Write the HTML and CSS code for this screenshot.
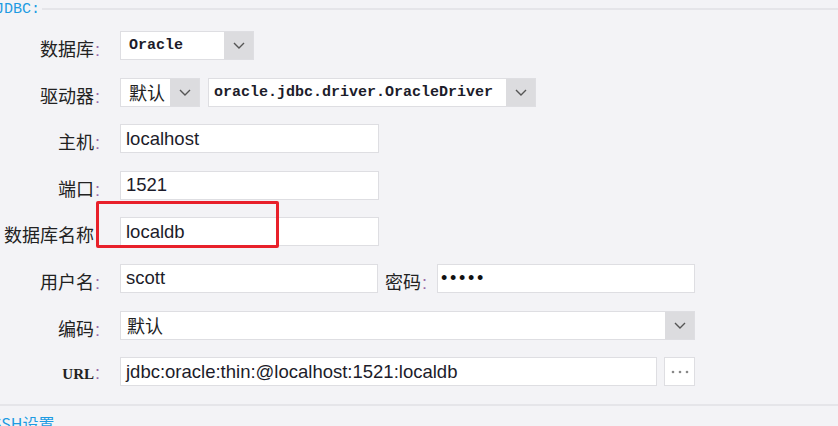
FILE: index.html
```html
<!DOCTYPE html>
<html lang="zh-CN">
<head>
    <meta charset="UTF-8">
    <title>数据连接</title>
    <link rel="stylesheet" href="styles.css">
</head>
<body>
    <div class="panel">
        <div class="group-title">
            <span class="group-name">JDBC:</span>
            <span class="group-line"></span>
        </div>

        <div class="form">
            <div class="row">
                <label class="label">数据库<span class="colon">:</span></label>
                <div class="select w-db">
                    <span class="select-text mono">Oracle</span>
                    <span class="select-btn"><svg width="12" height="7" viewBox="0 0 12 7"><path d="M1 1 L6 6 L11 1" fill="none" stroke="#555" stroke-width="1.4"/></svg></span>
                </div>
            </div>

            <div class="row">
                <label class="label">驱动器<span class="colon">:</span></label>
                <div class="select w-mode">
                    <span class="select-text">默认</span>
                    <span class="select-btn"><svg width="12" height="7" viewBox="0 0 12 7"><path d="M1 1 L6 6 L11 1" fill="none" stroke="#555" stroke-width="1.4"/></svg></span>
                </div>
                <div class="select w-driver">
                    <span class="select-text mono tight">oracle.jdbc.driver.OracleDriver</span>
                    <span class="select-btn"><svg width="12" height="7" viewBox="0 0 12 7"><path d="M1 1 L6 6 L11 1" fill="none" stroke="#555" stroke-width="1.4"/></svg></span>
                </div>
            </div>

            <div class="row">
                <label class="label">主机<span class="colon">:</span></label>
                <div class="input w-short">localhost</div>
            </div>

            <div class="row">
                <label class="label">端口<span class="colon">:</span></label>
                <div class="input w-short">1521</div>
            </div>

            <div class="row">
                <label class="label">数据库名称<span class="colon">:</span></label>
                <div class="input w-short highlight-wrap">
                    localdb
                    <span class="highlight"></span>
                </div>
            </div>

            <div class="row">
                <label class="label">用户名<span class="colon">:</span></label>
                <div class="input w-user">scott</div>
                <label class="label-inline">密码<span class="colon">:</span></label>
                <div class="input w-user password">•••••</div>
            </div>

            <div class="row">
                <label class="label">编码<span class="colon">:</span></label>
                <div class="select w-wide">
                    <span class="select-text enc">默认</span>
                    <span class="select-btn"><svg width="12" height="7" viewBox="0 0 12 7"><path d="M1 1 L6 6 L11 1" fill="none" stroke="#555" stroke-width="1.4"/></svg></span>
                </div>
            </div>

            <div class="row">
                <label class="label url-label">URL<span class="colon">:</span></label>
                <div class="input w-url">jdbc:oracle:thin:@localhost:1521:localdb</div>
                <div class="more-btn"><svg width="18" height="4" viewBox="0 0 18 4"><circle cx="2" cy="2" r="1.3" fill="#888"/><circle cx="9" cy="2" r="1.3" fill="#888"/><circle cx="16" cy="2" r="1.3" fill="#888"/></svg></div>
            </div>
        </div>

        <div class="divider"></div>
        <div class="next-group">SSH设置</div>
    </div>
</body>
</html>
```

FILE: styles.css
```css
body {
    margin: 0;
    background-color: #f3f3f6;
    font-family: "Liberation Sans", "Noto Sans CJK SC", sans-serif;
    color: #222;
    overflow: hidden;
}
.panel {
    width: 838px;
    height: 426px;
    overflow: hidden;
}
.group-title {
    display: flex;
    align-items: center;
    height: 18px;
    margin-left: -5px;
}
.group-name {
    font-family: "Liberation Mono", "Noto Sans CJK SC", monospace;
    font-size: 15px;
    color: #1d9be2;
    white-space: nowrap;
}
.group-line {
    flex: 1;
    height: 2px;
    margin-left: 2px;
    background-color: #e5e5e9;
}
.form {
    display: flex;
    flex-direction: column;
    gap: 17.6px;
    padding-top: 13px;
}
.row {
    display: flex;
    align-items: center;
    height: 29px;
}
.label {
    width: 100px;
    margin-right: 20px;
    padding-top: 5px;
    text-align: right;
    font-size: 18px;
    font-family: "Noto Sans CJK SC", sans-serif;
    color: #222;
    white-space: nowrap;
    flex-shrink: 0;
}
.label-inline {
    margin: 0 10px 0 7px;
    padding-top: 5px;
    font-size: 18px;
    font-family: "Noto Sans CJK SC", sans-serif;
    white-space: nowrap;
}
.colon {
    font-family: "Liberation Sans", sans-serif;
    color: #9a6aa8;
    margin-left: 1px;
}
.url-label {
    font-family: "Liberation Serif", serif;
    font-size: 15px;
    font-weight: bold;
    padding-top: 3px;
}
.url-label .colon {
    font-weight: normal;
    font-size: 18px;
}
.input,
.select,
.more-btn {
    box-sizing: border-box;
    height: 29px;
    background-color: #fff;
    border: 1px solid #dedee2;
}
.input {
    display: flex;
    align-items: center;
    padding-left: 5px;
    font-size: 18.5px;
    color: #1c1c2a;
    white-space: nowrap;
}
.select {
    display: flex;
    align-items: stretch;
}
.select-text {
    flex: 1;
    display: flex;
    align-items: center;
    padding-left: 8px;
    font-size: 18px;
    font-family: "Noto Sans CJK SC", sans-serif;
    white-space: nowrap;
    overflow: hidden;
}
.select-text.mono {
    font-family: "Liberation Mono", monospace;
    font-size: 15px;
    font-weight: bold;
    color: #1c1c2a;
}
.select-text.tight {
    padding-left: 5px;
}
.select-text.enc {
    padding-left: 6px;
}
.select-btn {
    width: 29px;
    display: flex;
    align-items: center;
    justify-content: center;
    background-color: #dcdcdf;
}
.w-db { width: 134px; }
.w-mode { width: 80px; margin-right: 8px; }
.w-driver { width: 328px; }
.w-short { width: 259px; }
.w-user { width: 258px; }
.w-wide { width: 575px; }
.w-url { width: 537px; margin-right: 7px; }
.password {
    font-size: 18px;
    letter-spacing: 2.7px;
    padding-left: 3px;
    color: #111;
}
.more-btn {
    width: 31px;
    display: flex;
    align-items: center;
    justify-content: center;
}
.highlight-wrap {
    position: relative;
}
.highlight {
    position: absolute;
    left: -25px;
    top: -17px;
    width: 177px;
    height: 41px;
    border: 3px solid #e8202a;
    border-radius: 2px;
}
.divider {
    height: 2px;
    margin-top: 18px;
    background-color: #e5e5e9;
}
.next-group {
    margin-top: 5px;
    margin-left: -8px;
    font-size: 16px;
    font-family: "Noto Sans CJK SC", sans-serif;
    color: #1d9be2;
    white-space: nowrap;
}
```
